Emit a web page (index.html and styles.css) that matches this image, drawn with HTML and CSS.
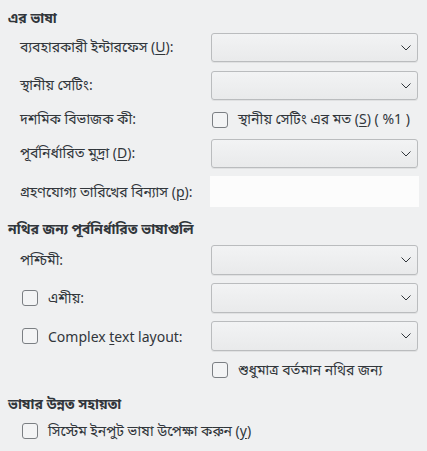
FILE: index.html
```html
<!DOCTYPE html>
<html lang="bn">
<head>
<meta charset="utf-8">
<title>ভাষা</title>
<link rel="stylesheet" href="styles.css">
</head>
<body>
<div class="page">
  <section class="group group-ui">
    <h2 class="group-title">এর ভাষা</h2>
    <div class="form-grid grid-ui">
      <span class="field-label">ব্যবহারকারী ইন্টারফেস (<u>U</u>):</span>
      <div class="combo"><svg class="chev" viewBox="0 0 10 6" width="10" height="6"><polyline points="0.5,0.5 5,5 9.5,0.5"/></svg></div>

      <span class="field-label">স্থানীয় সেটিং:</span>
      <div class="combo"><svg class="chev" viewBox="0 0 10 6" width="10" height="6"><polyline points="0.5,0.5 5,5 9.5,0.5"/></svg></div>

      <span class="field-label">দশমিক বিভাজক কী:</span>
      <label class="check-row"><span class="check"></span><span>স্থানীয় সেটিং এর মত (<u>S</u>) ( %1 )</span></label>

      <span class="field-label">পূর্বনির্ধারিত মুদ্রা (<u>D</u>):</span>
      <div class="combo"><svg class="chev" viewBox="0 0 10 6" width="10" height="6"><polyline points="0.5,0.5 5,5 9.5,0.5"/></svg></div>

      <span class="field-label">গ্রহণযোগ্য তারিখের বিন্যাস (<u>p</u>):</span>
      <div class="entry"></div>
    </div>
  </section>

  <section class="group group-doc">
    <h2 class="group-title">নথির জন্য পূর্বনির্ধারিত ভাষাগুলি</h2>
    <div class="form-grid grid-doc">
      <span class="field-label">পশ্চিমী:</span>
      <div class="combo"><svg class="chev" viewBox="0 0 10 6" width="10" height="6"><polyline points="0.5,0.5 5,5 9.5,0.5"/></svg></div>

      <label class="check-row check-label"><span class="check"></span><span>এশীয়:</span></label>
      <div class="combo"><svg class="chev" viewBox="0 0 10 6" width="10" height="6"><polyline points="0.5,0.5 5,5 9.5,0.5"/></svg></div>

      <label class="check-row check-label"><span class="check"></span><span>Complex <u>t</u>ext layout:</span></label>
      <div class="combo"><svg class="chev" viewBox="0 0 10 6" width="10" height="6"><polyline points="0.5,0.5 5,5 9.5,0.5"/></svg></div>

      <span class="field-label"></span>
      <label class="check-row"><span class="check"></span><span>শুধুমাত্র বর্তমান নথির জন্য</span></label>
    </div>
  </section>

  <section class="group group-adv">
    <h2 class="group-title">ভাষার উন্নত সহায়তা</h2>
    <div class="form-grid grid-adv">
      <label class="check-row check-label span-all"><span class="check"></span><span>সিস্টেম ইনপুট ভাষা উপেক্ষা করুন (<u>y</u>)</span></label>
    </div>
  </section>
</div>
</body>
</html>
```

FILE: styles.css
```css
html, body {
  margin: 0;
  padding: 0;
  background: #eff0f1;
}

body {
  font-family: "Noto Sans", "Noto Sans Bengali", "Lohit Bengali", "DejaVu Sans", sans-serif;
  font-size: 14px;
  color: #31363b;
  width: 427px;
  height: 451px;
  overflow: hidden;
}

.page {
  padding: 8px 0 0 8px;
}

.group-title {
  margin: 0;
  font-size: 14px;
  font-weight: bold;
  line-height: 20px;
  height: 20px;
}

.group-doc .group-title {
  margin-top: 12px;
}

.group-adv .group-title {
  margin-top: 13px;
}

.form-grid {
  display: grid;
  grid-template-columns: 191px 207px;
  padding-left: 12px;
  align-items: center;
}

.grid-ui {
  margin-top: 5px;
  grid-template-rows: 29px 29px 21px 29px 30px;
  row-gap: 9px;
}

.grid-doc {
  margin-top: 6px;
  grid-template-rows: 30px 30px 30px 22px;
  row-gap: 8px;
}

.grid-adv {
  margin-top: 6px;
  grid-template-rows: 22px;
}

.field-label {
  white-space: nowrap;
}

u {
  text-decoration: underline;
  text-underline-offset: 2px;
}

.combo {
  box-sizing: border-box;
  height: 100%;
  border: 1px solid #babcbe;
  border-radius: 3px;
  background: linear-gradient(#f2f3f4, #e9eaeb);
  box-shadow: 0 1px 0 rgba(0, 0, 0, 0.06);
  display: flex;
  align-items: center;
  justify-content: flex-end;
  padding-right: 6px;
}

.chev {
  display: block;
  fill: none;
  stroke: #31363b;
  stroke-width: 1;
}

.entry {
  box-sizing: border-box;
  height: 31px;
  width: 209px;
  margin-left: -1px;
  margin-top: -1px;
  background: #fcfcfc;
}

.check-row {
  display: flex;
  align-items: center;
  gap: 10px;
  white-space: nowrap;
  margin-left: 1px;
}

.check-label {
  margin-left: 2px;
}

.span-all {
  grid-column: 1 / -1;
}

.check {
  box-sizing: border-box;
  flex: none;
  width: 16px;
  height: 16px;
  border: 1px solid #7b7f83;
  border-radius: 3px;
  background: #f3f4f5;
}
```
